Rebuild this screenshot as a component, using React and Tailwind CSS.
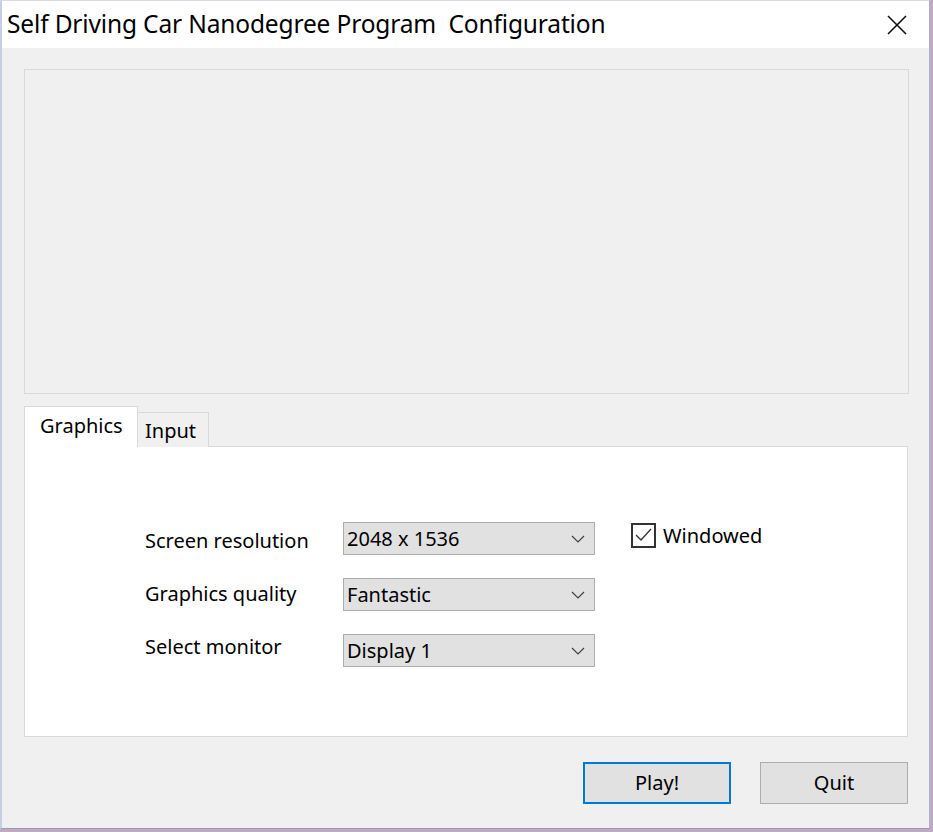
import React from 'react';

const font = { fontFamily: '"Noto Sans", "Open Sans", sans-serif' };

const Chevron = () => (
    <svg width="14" height="8" viewBox="0 0 14 8" className="text-[#404040]">
        <path d="M1 1 L7 7 L13 1" fill="none" stroke="currentColor" strokeWidth="1.2" />
    </svg>
);

const Select = ({ value }) => (
    <div className="w-[252px] h-[33px] bg-[#e1e1e1] border border-[#adadad] flex items-center justify-between pl-[3px] pr-[9px] text-[20px] text-black">
        <span>{value}</span>
        <Chevron />
    </div>
);

const Row = ({ label, value, extra, shift }) => (
    <div className="flex items-center h-[33px]">
        <div className={`w-[198px] text-[20px] text-black ${shift}`}>{label}</div>
        <Select value={value} />
        {extra}
    </div>
);

const App = () => {
    return (
        <div className="w-[933px] h-[832px] bg-[#bfa9c4] overflow-hidden" style={font}>
            <div className="w-[930px] h-[829px] flex flex-col bg-[#f0f0f0] border-l-2 border-t border-r border-b border-l-[#c3cfe3] border-t-[#d9dbe6] border-r-[#a9b4c9] border-b-[#9a9aa8]">
                {/* TITLE BAR */}
                <div className="h-[47px] bg-white flex items-center justify-between pl-[5px] pr-[22px]">
                    <span className="text-[24.5px] text-black tracking-[-0.15px]">Self Driving Car Nanodegree Program&nbsp; Configuration</span>
                    <svg width="20" height="20" viewBox="0 0 20 20">
                        <path d="M1 1 L19 19 M19 1 L1 19" stroke="#111" strokeWidth="1.6" />
                    </svg>
                </div>

                <div className="flex-1 px-[22px] pt-[21px]">
                    {/* IMAGE AREA */}
                    <div className="h-[325px] w-[885px] border border-[#d9d9d9] bg-[#f0f0f0]" />

                    {/* TABS */}
                    <div className="mt-[12px] flex items-end">
                        <div className="w-[114px] h-[41px] bg-white border border-[#d9d9d9] border-b-0 text-[20px] text-black pl-[15px] pt-[4px] relative z-10">
                            Graphics
                        </div>
                        <div className="w-[71px] h-[35px] bg-[#f0f0f0] border border-[#d9d9d9] border-l-0 border-b-0 text-[20px] text-black pl-[7px] pt-[3px]">
                            Input
                        </div>
                    </div>
                    <div className="-mt-[1px] h-[291px] w-[884px] bg-white border border-[#d9d9d9] pt-[75px] pl-[120px] flex flex-col gap-[23px]">
                        <Row
                            label="Screen resolution"
                            value="2048 x 1536"
                            shift="translate-y-[2px]"
                            extra={
                                <div className="ml-[36px] -mt-[7px] flex items-center gap-[7px]">
                                    <div className="w-[25px] h-[25px] border-2 border-[#333] bg-white flex items-center justify-center">
                                        <svg width="17" height="14" viewBox="0 0 17 14">
                                            <path d="M1 7 L6 12 L16 1" fill="none" stroke="#333" strokeWidth="1.3" />
                                        </svg>
                                    </div>
                                    <span className="text-[20px] text-black translate-y-[1px]">Windowed</span>
                                </div>
                            }
                        />
                        <Row label="Graphics quality" value="Fantastic" shift="-translate-y-[1px]" />
                        <Row label="Select monitor" value="Display 1" shift="-translate-y-[4px]" />
                    </div>

                    {/* BUTTONS */}
                    <div className="mt-[25px] flex justify-end gap-[29px] w-[884px]">
                        <button className="w-[148px] h-[42px] bg-[#e1e1e1] border-2 border-[#0078d7] text-[20px] text-black">Play!</button>
                        <button className="w-[148px] h-[42px] bg-[#e1e1e1] border border-[#adadad] text-[20px] text-black">Quit</button>
                    </div>
                </div>
            </div>
        </div>
    );
};

export default App;
